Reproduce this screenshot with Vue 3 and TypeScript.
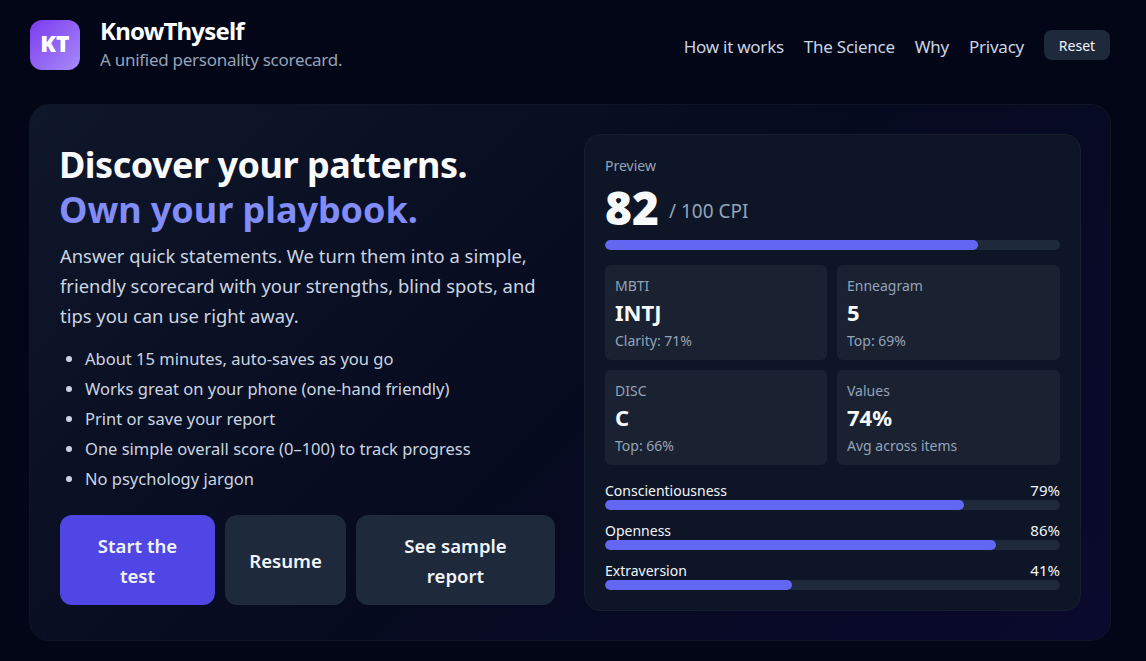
<template>
  <div class="page">
    <header class="top">
      <div class="brand">
        <div class="logo">KT</div>
        <div class="brand-text">
          <div class="name">KnowThyself</div>
          <div class="tagline">A unified personality scorecard.</div>
        </div>
      </div>
      <nav class="nav">
        <a v-for="link in links" :key="link" class="nav-link">{{ link }}</a>
        <button class="reset">Reset</button>
      </nav>
    </header>

    <main class="hero">
      <section class="intro">
        <h1><span class="headline">Discover your patterns.</span><br /><span class="accent">Own your playbook.</span></h1>
        <p class="lead">
          Answer quick statements. We turn them into a simple, friendly scorecard with your
          strengths, blind spots, and tips you can use right away.
        </p>
        <ul class="points">
          <li v-for="point in points" :key="point">{{ point }}</li>
        </ul>
        <div class="actions">
          <button class="btn primary start">Start the test</button>
          <button class="btn resume">Resume</button>
          <button class="btn sample">See sample report</button>
        </div>
      </section>

      <aside class="preview">
        <div class="preview-label">Preview</div>
        <div class="score">
          <span class="score-num">82</span>
          <span class="score-of">/ 100 CPI</span>
        </div>
        <div class="track"><div class="fill" :style="{ width: '82%' }"></div></div>

        <div class="stats">
          <div v-for="stat in stats" :key="stat.label" class="stat">
            <div class="stat-label">{{ stat.label }}</div>
            <div class="stat-value">{{ stat.value }}</div>
            <div class="stat-note">{{ stat.note }}</div>
          </div>
        </div>

        <div class="traits">
          <div v-for="trait in traits" :key="trait.name" class="trait">
            <div class="trait-head">
              <span>{{ trait.name }}</span>
              <span class="trait-pct">{{ trait.pct }}%</span>
            </div>
            <div class="track"><div class="fill" :style="{ width: trait.pct + '%' }"></div></div>
          </div>
        </div>
      </aside>
    </main>
  </div>
</template>

<script setup lang="ts">
const links = ['How it works', 'The Science', 'Why', 'Privacy']

const points = [
  'About 15 minutes, auto-saves as you go',
  'Works great on your phone (one-hand friendly)',
  'Print or save your report',
  'One simple overall score (0–100) to track progress',
  'No psychology jargon'
]

const stats = [
  { label: 'MBTI', value: 'INTJ', note: 'Clarity: 71%' },
  { label: 'Enneagram', value: '5', note: 'Top: 69%' },
  { label: 'DISC', value: 'C', note: 'Top: 66%' },
  { label: 'Values', value: '74%', note: 'Avg across items' }
]

const traits = [
  { name: 'Conscientiousness', pct: 79 },
  { name: 'Openness', pct: 86 },
  { name: 'Extraversion', pct: 41 }
]
</script>

<style>
html,
body {
  margin: 0;
  background: #020617;
}
</style>

<style scoped>
.page {
  box-sizing: border-box;
  width: 1146px;
  height: 661px;
  padding: 20px 35px 20px 29px;
  overflow: hidden;
  font-family: "Noto Sans", sans-serif;
  color: #e2e8f0;
  background: #020617;
}

.top {
  display: flex;
  align-items: center;
  justify-content: space-between;
  height: 50px;
  padding: 0 1px;
  margin-bottom: 34px;
}

.brand {
  display: flex;
  align-items: center;
  gap: 20px;
}

.logo {
  box-sizing: border-box;
  width: 50px;
  height: 50px;
  padding-bottom: 5px;
  border-radius: 12px;
  display: flex;
  align-items: center;
  justify-content: center;
  font-size: 23px;
  font-weight: 900;
  color: #fff;
  background: linear-gradient(135deg, #7c3aed, #a78bfa);
}

.brand-text {
  align-self: flex-start;
  margin-top: -1px;
}

.name {
  font-size: 24px;
  line-height: 30px;
  font-weight: 700;
  letter-spacing: -0.8px;
  color: #fff;
}

.tagline {
  font-size: 17px;
  line-height: 28px;
  letter-spacing: -0.28px;
  color: #94a3b8;
}

.nav {
  display: flex;
  align-items: center;
  gap: 20px;
}

.nav-link {
  padding-top: 2px;
  font-size: 17px;
  letter-spacing: -0.25px;
  color: #cbd5e1;
}

.reset {
  height: 30px;
  width: 66px;
  padding: 0;
  border: none;
  border-radius: 8px;
  background: #1e293b;
  color: #f1f5f9;
  font-family: inherit;
  font-size: 14px;
}

.hero {
  box-sizing: border-box;
  height: 537px;
  padding: 29px 29px 29px 30px;
  display: grid;
  grid-template-columns: 495px 497px;
  justify-content: space-between;
  border: 1px solid #0f1524;
  border-radius: 20px;
  background: linear-gradient(135deg, #0f172a, #060a1f 52%, #0a0a2e);
}

h1 {
  margin: 8px 0 0 -1px;
  font-size: 36px;
  line-height: 45px;
  font-weight: 700;
  color: #f8fafc;
}

.headline {
  letter-spacing: -0.5px;
}

.accent {
  letter-spacing: -0.05px;
  color: #818cf8;
}

.lead {
  margin: 9px 0 0;
  font-size: 18.4px;
  line-height: 30px;
  color: #cbd5e1;
}

.points {
  margin: 13px 0 0;
  padding-left: 25px;
  font-size: 16.5px;
  line-height: 30px;
  color: #cbd5e1;
}

.actions {
  display: flex;
  gap: 10px;
  margin-top: 21px;
}

.btn {
  box-sizing: border-box;
  height: 90px;
  padding: 2px 20px 0;
  border: none;
  border-radius: 12px;
  background: #1e293b;
  color: #f1f5f9;
  font-family: inherit;
  font-size: 18.6px;
  line-height: 30px;
  font-weight: 600;
}

.primary {
  background: #4f46e5;
}

.start {
  width: 155px;
  padding: 2px 30px 0;
}

.resume {
  width: 121px;
}

.sample {
  width: 199px;
  padding: 2px 30px 0;
}

.preview {
  box-sizing: border-box;
  height: 477px;
  padding: 20px;
  border: 1px solid #161e30;
  border-radius: 16px;
  background: #0e1526;
}

.preview-label {
  font-size: 14px;
  line-height: 22px;
  color: #94a3b8;
}

.score {
  display: flex;
  align-items: flex-start;
  gap: 10px;
  height: 59px;
  margin-top: 4px;
}

.score-num {
  font-size: 46px;
  line-height: 52px;
  font-weight: 900;
  color: #f8fafc;
}

.score-of {
  margin-top: 4px;
  font-size: 19px;
  line-height: 52px;
  color: #94a3b8;
}

.track {
  height: 10px;
  border-radius: 5px;
  background: #1e293b;
  overflow: hidden;
}

.fill {
  height: 100%;
  border-radius: 5px;
  background: #6366f1;
}

.stats {
  display: grid;
  grid-template-columns: 222fr 223fr;
  gap: 10px;
  margin-top: 15px;
}

.stat {
  box-sizing: border-box;
  height: 95px;
  padding: 10px;
  border-radius: 6px;
  background: #1a2232;
}

.stat-label,
.stat-note {
  font-size: 14px;
  line-height: 22px;
  color: #94a3b8;
}

.stat-value {
  font-size: 22px;
  line-height: 30px;
  font-weight: 700;
  color: #f8fafc;
}

.stat-note {
  margin-top: 3px;
}

.traits {
  margin-top: 15px;
}

.trait {
  margin-bottom: 10px;
}

.trait-head {
  display: flex;
  justify-content: space-between;
  height: 20px;
  font-size: 14px;
  line-height: 22px;
  color: #f1f5f9;
}

.trait-pct {
  font-size: 15px;
  line-height: 21px;
}
</style>
